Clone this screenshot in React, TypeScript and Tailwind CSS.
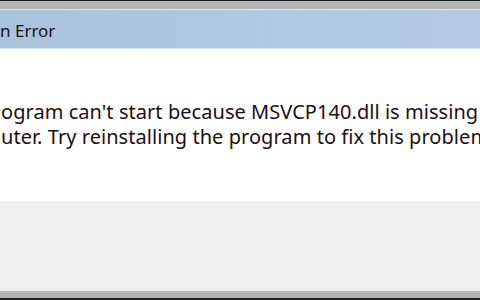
export default function App() {
  return (
    <div
      className="flex h-[300px] w-[480px] flex-col overflow-hidden bg-white text-black"
      style={{ fontFamily: '"Noto Sans", "Open Sans", sans-serif' }}
    >
      {/* window frame top */}
      <div className="h-px bg-[#1c1c1c]" />
      <div className="h-[8px] bg-[#b4b4b4]" />
      <div className="h-px bg-[#e2e8ef]" />

      {/* title bar */}
      <div className="flex h-[38px] items-center bg-gradient-to-r from-[#a9c3dd] via-[#adc8e0] to-[#b2cbe2] pt-[3px]">
        <span className="whitespace-nowrap text-[17px] leading-none text-[#1a1010]">n Error</span>
      </div>
      <div className="h-px bg-[#d8e4f0]" />

      {/* message */}
      <div className="h-[152px] overflow-hidden bg-white pt-[50px]">
        <p className="whitespace-nowrap pl-[1px] text-[20px] leading-[25px] tracking-[0.05px] text-[#1a0f14]">
          ogram can&apos;t start because MSVCP140.dll is missing
        </p>
        <p className="whitespace-nowrap pl-[1px] text-[20px] leading-[25px] tracking-[0.05px] text-[#1a0f14]">
          uter. Try reinstalling the program to fix this problem.
        </p>
      </div>

      {/* button strip */}
      <div className="h-[90px] bg-[#efefef]" />
      <div className="h-[7px] bg-[#b4b4b4]" />
      <div className="h-[2px] bg-[#1c1c1c]" />
    </div>
  );
}
